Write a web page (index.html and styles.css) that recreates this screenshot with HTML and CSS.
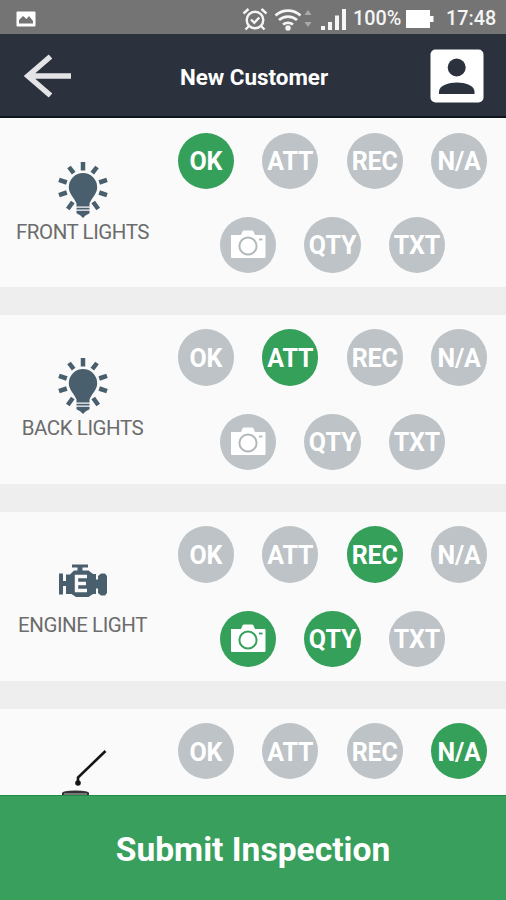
FILE: index.html
```html
<!DOCTYPE html>
<html lang="en">
<head>
<meta charset="utf-8">
<title>New Customer</title>
<link rel="stylesheet" href="styles.css">
</head>
<body>
<svg class="defs" aria-hidden="true">
  <symbol id="camera" viewBox="0 0 36 30">
    <path fill="currentColor" d="M1 6h10l1.500-3.500q.4-1 1.500-1h8q1.100 0 1.500 1l1.500 3.500h9.500q1 0 1 1v21q0 1-1 1H2q-1 0-1-1z"/>
    <circle class="camera-lens" cx="18" cy="17" r="8.600"/>
    <path class="camera-flash" d="M29 10.500h3.500"/>
  </symbol>
  <symbol id="bulb" viewBox="0 0 52 58">
    <path class="rays" d="M26 1v8.500M12 6l4.700 6.200M40 6l-4.700 6.200M2 18.800l7.800 2.700M50 18.800l-7.800 2.700M2 34.200l7.800-2.700M50 34.200l-7.800-2.700M10.800 48l5-7M41.200 48l-5-7"/>
    <path fill="currentColor" d="M26 12a14.200 14.200 0 0 0-14.200 14.200c0 6.800 5.500 10.200 7.700 16.300v3h13v-3c2.200-6.100 7.700-9.500 7.700-16.300A14.200 14.200 0 0 0 26 12zM19.500 46.700h13v1.800h-13zM19.500 49.800h13v2.500L28.500 54.500 26 57l-2.500-2.500-4-2.200z"/>
  </symbol>
</svg>
<div class="screen">
  <div class="status">
    <svg class="picture" viewBox="0 0 20 16"><rect x=".5" y=".5" width="19" height="15" rx="1" fill="#fff"/><path fill="#747474" d="M3 12.500V9l4-4 3.500 3L13 5l4 5v2.500z"/></svg>
    <svg class="alarm" viewBox="0 0 26 24"><g fill="none" stroke="#f5f5f5" stroke-width="2.400"><circle cx="13" cy="13" r="8.300"/><path d="M1.500 6.500l5-4.500M24.500 6.500l-5-4.500M7 19l-3.500 3.500M19 19l3.500 3.500M9 12.500l3.300 3.300 5-5.300"/></g></svg>
    <svg class="wifi" viewBox="0 0 38 24"><g fill="none" stroke="#f5f5f5" stroke-width="2.700"><path d="M1.500 8.500a18.500 18.500 0 0 1 25 0M5 13a13.500 13.500 0 0 1 18 0M9 17.500a8 8 0 0 1 10 0"/></g><circle cx="14" cy="21" r="2.700" fill="#f5f5f5"/><path fill="#aaa" d="M34 3l3.500 5h-7zM34 20l3.500-5h-7z"/></svg>
    <svg class="signal" viewBox="0 0 25 22"><path fill="#f5f5f5" d="M0 18h4v4H0zM7 14h4v8H7zM14 7.500h4V22h-4zM21 1h4v21h-4z"/></svg>
    <span class="percent">100%</span>
    <svg class="battery" viewBox="0 0 28 20"><path fill="#fff" d="M0 1h24v6h3.500v6H24v6H0z"/></svg>
    <span class="clock">17:48</span>
  </div>
  <header class="header">
    <svg class="back" viewBox="0 0 48 44"><path fill="none" stroke="#e4e4e6" stroke-width="5.500" d="M26.500 2.500L4 22l22.500 19.500M4 22h43"/></svg>
    <h1 class="title">New Customer</h1>
    <svg class="profile" viewBox="0 0 54 54"><rect x=".5" y=".5" width="53" height="53" rx="5" fill="#fff"/><g fill="#2b313d"><circle cx="26.700" cy="18.500" r="9"/><path d="M9 45v-2.500C9 36.500 19 33.500 27 33.500s17.500 3 17.500 9V45z"/></g></svg>
  </header>
  <main class="list">
    <section class="card">
      <div class="item"><svg class="bulb"><use href="#bulb"/></svg><span class="label">FRONT LIGHTS</span></div>
      <div class="options">
        <div class="row"><button class="chip on">OK</button><button class="chip">ATT</button><button class="chip">REC</button><button class="chip">N/A</button></div>
        <div class="row"><button class="chip" aria-label="Photo"><svg class="camera"><use href="#camera"/></svg></button><button class="chip">QTY</button><button class="chip">TXT</button></div>
      </div>
    </section>
    <section class="card">
      <div class="item"><svg class="bulb"><use href="#bulb"/></svg><span class="label">BACK LIGHTS</span></div>
      <div class="options">
        <div class="row"><button class="chip">OK</button><button class="chip on">ATT</button><button class="chip">REC</button><button class="chip">N/A</button></div>
        <div class="row"><button class="chip" aria-label="Photo"><svg class="camera"><use href="#camera"/></svg></button><button class="chip">QTY</button><button class="chip">TXT</button></div>
      </div>
    </section>
    <section class="card">
      <div class="item">
        <svg class="engine" viewBox="0 0 50 34"><path fill="#4a5f6e" d="M14 .5h16v3h-5.500V6.500h6l4.500 3.500h3v5.500h2v-3.500l3-2.500h4L49 12v17l-2 2.500h-4l-3-2.500v-4.500h-2V30h-3l-4.500 3H18l-4.500-3H8v-8H5v8.500H1V9.500h4V17h3v-6.500h4l4-4h3.500v-3H14z"/><path fill="none" stroke="#fafafa" stroke-width="3.400" d="M29 12.500H18.500v14H29M18.500 19.500h9.500"/></svg>
        <span class="label">ENGINE LIGHT</span>
      </div>
      <div class="options">
        <div class="row"><button class="chip">OK</button><button class="chip">ATT</button><button class="chip on">REC</button><button class="chip">N/A</button></div>
        <div class="row"><button class="chip on" aria-label="Photo"><svg class="camera"><use href="#camera"/></svg></button><button class="chip on">QTY</button><button class="chip">TXT</button></div>
      </div>
    </section>
    <section class="card">
      <div class="item oil-item">
        <svg class="oil" viewBox="0 0 46 46"><path fill="none" stroke="#151515" stroke-width="2.600" d="M44.500 1L17 27.500V32"/><circle cx="17" cy="33" r="2.800" fill="#151515"/><path fill="#333" d="M1 43q0-2.500 13.500-2.500T28 43v3H1z"/><path fill="#777" d="M3 43h23v3H3z"/></svg>
      </div>
      <div class="options">
        <div class="row"><button class="chip">OK</button><button class="chip">ATT</button><button class="chip">REC</button><button class="chip on">N/A</button></div>
      </div>
    </section>
  </main>
  <button class="submit">Submit Inspection</button>
</div>
</body>
</html>
```
FILE: styles.css
```css
* { box-sizing: border-box; }
body { margin: 0; font-family: Roboto, sans-serif; }
button { border: 0; padding: 0; font: inherit; color: inherit; }
svg { display: block; flex: none; }
.defs { position: absolute; width: 0; height: 0; }
.screen { width: 506px; height: 900px; display: flex; flex-direction: column; overflow: hidden; background: #eee; }

.status { flex: none; height: 34px; background: #747474; color: #f5f5f5; display: flex; align-items: center; padding: 3px 11px 0 16px; font-size: 19.800px; font-weight: 500; line-height: 30px; }
.picture { width: 20px; height: 16px; }
.alarm { width: 26px; height: 24px; margin-left: auto; }
.wifi { width: 38px; height: 24px; margin-left: 6px; }
.signal { width: 25px; height: 22px; margin-left: 9px; margin-top: 1px; }
.percent { width: 47px; margin-left: 7px; }
.battery { width: 28px; height: 20px; margin-left: 6px; }
.clock { width: 49px; margin-left: 12px; white-space: nowrap; }

.header { flex: none; height: 84px; background: #2b313d; border-bottom: 2px solid #0e131c; display: flex; align-items: center; justify-content: space-between; padding: 2px 21.500px 0 23.500px; color: #fff; }
.back { width: 48px; height: 44px; }
.title { margin: 2px 0 0 6px; font-size: 22.400px; font-weight: 700; line-height: 28px; }
.profile { width: 54px; height: 54px; }

.list { flex: 1; min-height: 0; overflow: hidden; display: flex; flex-direction: column; gap: 28.1px; }
.card { flex: none; height: 168.8px; background: #fafafa; display: flex; padding: 14.500px 19px 0 0; }
.item { width: 165px; display: flex; flex-direction: column; align-items: center; color: #4a5f6e; }
.bulb { width: 52px; height: 58px; margin-top: 28px; }
.engine { width: 50px; height: 34px; margin-top: 38px; margin-bottom: 14px; }
.label { font-size: 20.500px; font-weight: 400; letter-spacing: -.45px; line-height: 27px; color: #6c6c6c; white-space: nowrap; }
.oil { width: 46px; height: 46px; margin: 27px 0 0 2px; }
.rays { fill: none; stroke: currentColor; stroke-width: 4.500; }
.options { flex: 1; display: flex; flex-direction: column; align-items: flex-end; gap: 28px; }
.row { width: 322px; display: flex; justify-content: center; gap: 28.100px; margin-right: -6.500px; }
.chip { flex: none; width: 56.300px; height: 56.300px; border-radius: 50%; display: flex; align-items: center; justify-content: center; background: #bdc3c6; color: #fff; font-size: 25px; font-weight: 700; letter-spacing: -.2px; padding-top: 2px; --tone: #b2b9bd; }
.on { background: #34a05a; --tone: #34a05a; }
.camera { width: 36px; height: 30px; margin-top: -3px; }
.camera-lens { fill: none; stroke: var(--tone); stroke-width: 2; }
.camera-flash { stroke: var(--tone); stroke-width: 1.800; }

.submit { flex: none; height: 105px; background: #389f5c; border-top: 1px solid #218b4c; color: #fff; font-size: 33.600px; font-weight: 700; text-align: center; padding-top: 2px; }
```
